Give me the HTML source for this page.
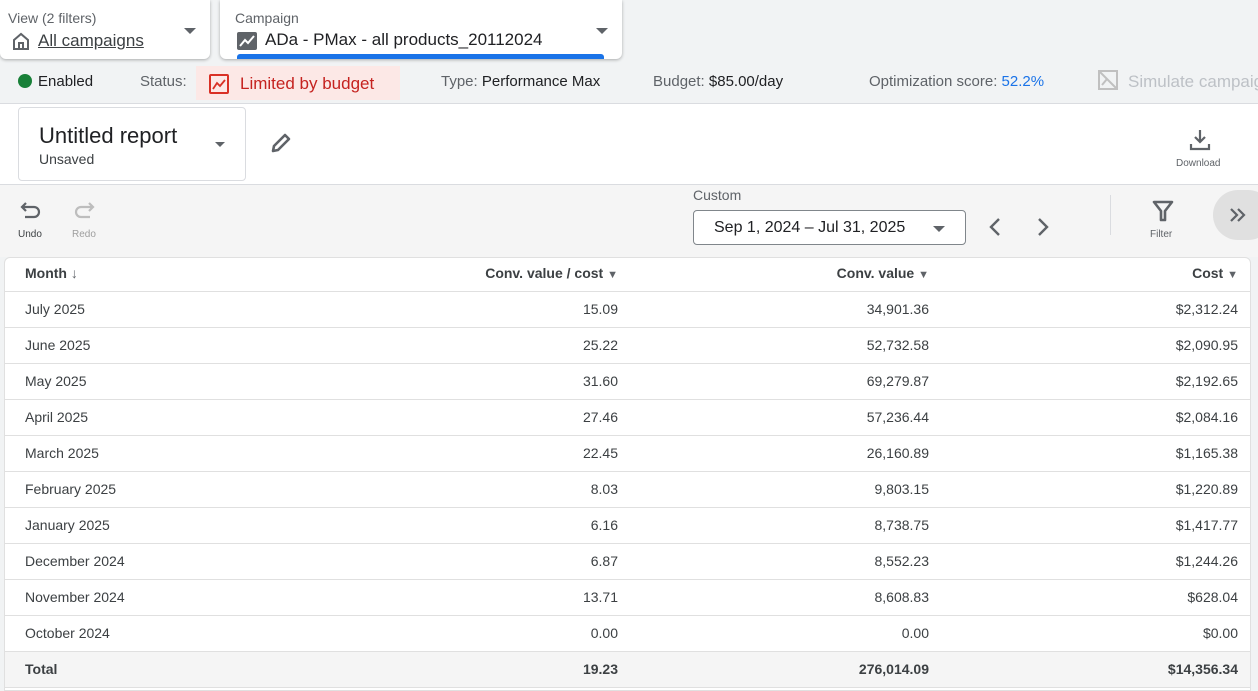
<!DOCTYPE html>
<html><head><meta charset="utf-8"><style>
*{box-sizing:border-box;margin:0;padding:0}
body{width:1258px;height:691px;overflow:hidden;background:#f1f3f4;font-family:"Liberation Sans",Roboto,sans-serif;color:#202124;position:relative}
.abs{position:absolute}
.card{position:absolute;background:#fff;border-radius:0 0 6px 6px;box-shadow:0 1px 3px rgba(0,0,0,.3)}
.lbl{font-size:14px;color:#5f6368}
.tri{width:0;height:0;border-left:6px solid transparent;border-right:6px solid transparent;border-top:6px solid #5f6368;position:absolute}
.st{font-size:15px;color:#5f6368;top:73px}
.st b{font-weight:normal;color:#202124}
table{border-collapse:collapse;width:100%;font-size:14px;position:relative;top:-3px}
td{height:36px;border-top:1px solid #e0e0e0;padding:0 20px;color:#3c4043}
td.r{text-align:right;padding-right:12px}
tr.h td{font-weight:bold;color:#3c4043;border-top:none;padding-top:1px}
tr.t td{background:#f5f5f5;font-weight:bold;border-bottom:1px solid #e0e0e0}
.ar{color:#5f6368;font-size:11px;font-weight:normal}
</style></head><body>
<div class="card" style="left:0;top:0;width:210px;height:59px">
 <div class="lbl abs" style="left:8px;top:10px">View (2 filters)</div>
 <svg class="abs" style="left:11px;top:31px" width="20" height="20" viewBox="0 0 20 20"><path d="M3 9 L10 3 L17 9 V18 H3 Z M8 18 V12 H12 V18" fill="none" stroke="#5f6368" stroke-width="2"/></svg>
 <div class="abs" style="left:38px;top:31px;font-size:17px;text-decoration:underline;color:#3c4043">All campaigns</div>
 <div class="tri" style="left:184px;top:28px"></div>
</div>
<div class="card" style="left:220px;top:0;width:402px;height:59px">
 <div class="lbl abs" style="left:15px;top:10px">Campaign</div>
 <svg class="abs" style="left:17px;top:32px" width="20" height="18" viewBox="0 0 20 18"><rect x="0" y="0" width="20" height="18" rx="2" fill="#5f6368"/><path d="M3 14 L8 8 L11 11 L17 4" fill="none" stroke="#fff" stroke-width="2"/></svg>
 <div class="abs" style="left:45px;top:30px;font-size:17px;color:#202124">ADa - PMax - all products_20112024</div>
 <div class="tri" style="left:376px;top:28px"></div>
 <div class="abs" style="left:17px;top:54px;width:367px;height:5px;background:#1a73e8;border-radius:3px 3px 0 0"></div>
</div>
<div class="abs" style="left:18px;top:74px;width:14px;height:14px;border-radius:50%;background:#188038"></div>
<div class="abs st" style="left:38px;color:#202124">Enabled</div>
<div class="abs st" style="left:140px">Status:</div>
<div class="abs" style="left:196px;top:66px;width:204px;height:34px;background:#fce8e6"></div>
<svg class="abs" style="left:209px;top:74px" width="20" height="20" viewBox="0 0 20 20"><rect x="1" y="1" width="18" height="18" rx="1" fill="none" stroke="#d93025" stroke-width="2"/><path d="M4 15 L8 9 L11 12 L16 6" fill="none" stroke="#d93025" stroke-width="1.8"/></svg>
<div class="abs" style="left:240px;top:74px;font-size:17px;color:#c5221f">Limited by budget</div>
<div class="abs st" style="left:441px">Type: <b>Performance Max</b></div>
<div class="abs st" style="left:653px">Budget: <b>$85.00/day</b></div>
<div class="abs st" style="left:869px">Optimization score: <span style="color:#1a73e8">52.2%</span></div>
<svg class="abs" style="left:1097px;top:69px" width="22" height="22" viewBox="0 0 22 22"><rect x="2" y="2" width="18" height="18" fill="none" stroke="#c0c0c0" stroke-width="2"/><path d="M2 2 L20 20 M5 16 L10 10 L13 13" fill="none" stroke="#c0c0c0" stroke-width="2"/></svg>
<div class="abs st" style="left:1128px;color:#bdc1c6;white-space:nowrap;font-size:17px;top:72px">Simulate campaign</div>

<div class="abs" style="left:0;top:103px;width:1258px;height:82px;background:#fff;border-top:1px solid #dadce0;border-bottom:1px solid #dadce0"></div>
<div class="abs" style="left:18px;top:107px;width:228px;height:74px;border:1px solid #dadce0;border-radius:4px;background:#fff">
 <div class="abs" style="left:20px;top:15px;font-size:22px;color:#202124">Untitled report</div>
 <div class="abs" style="left:20px;top:43px;font-size:14px;color:#3c4043">Unsaved</div>
 <div class="tri" style="left:196px;top:34px;border-width:5px 5px 0;border-top-color:#5f6368"></div>
</div>
<svg class="abs" style="left:269px;top:131px" width="24" height="24" viewBox="0 0 24 24"><path d="M4 20 L5 15 L16 4 L20 8 L9 19 Z" fill="none" stroke="#5f6368" stroke-width="2.6" stroke-linejoin="round"/></svg>
<svg class="abs" style="left:1188px;top:128px" width="24" height="24" viewBox="0 0 24 24"><path d="M12 2 V14 M7 9 L12 14 L17 9 M3 16 V21 H21 V16" fill="none" stroke="#5f6368" stroke-width="2.2"/></svg>
<div class="abs" style="left:1176px;top:158px;font-size:10px;color:#5f6368">Download</div>

<div class="abs" style="left:0;top:185px;width:1258px;height:72px;background:#f5f5f5"></div>
<svg class="abs" style="left:20px;top:199px" width="22" height="22" viewBox="0 0 22 22"><path d="M6 4 L2 8 L6 12 M2 8 H14 A5 5 0 0 1 14 18 H5" fill="none" stroke="#5f6368" stroke-width="2.2"/></svg>
<div class="abs" style="left:18px;top:229px;font-size:10px;color:#3c4043">Undo</div>
<svg class="abs" style="left:73px;top:199px" width="22" height="22" viewBox="0 0 22 22"><path d="M16 4 L20 8 L16 12 M20 8 H8 A5 5 0 0 0 8 18 H17" fill="none" stroke="#bdbdbd" stroke-width="2.2"/></svg>
<div class="abs" style="left:72px;top:229px;font-size:10px;color:#9e9e9e">Redo</div>
<div class="abs" style="left:693px;top:187px;font-size:14px;color:#5f6368">Custom</div>
<div class="abs" style="left:693px;top:210px;width:273px;height:35px;border:1px solid #80868b;border-radius:4px;background:#fff">
 <div class="abs" style="left:20px;top:8px;font-size:16px;color:#202124">Sep 1, 2024 – Jul 31, 2025</div>
 <div class="tri" style="left:239px;top:15px"></div>
</div>
<svg class="abs" style="left:986px;top:216px" width="20" height="22" viewBox="0 0 20 22"><path d="M13 3 L5 11 L13 19" fill="none" stroke="#5f6368" stroke-width="2.4"/></svg>
<svg class="abs" style="left:1033px;top:216px" width="20" height="22" viewBox="0 0 20 22"><path d="M6 3 L14 11 L6 19" fill="none" stroke="#5f6368" stroke-width="2.4"/></svg>
<div class="abs" style="left:1110px;top:195px;width:1px;height:40px;background:#dadce0"></div>
<svg class="abs" style="left:1151px;top:199px" width="24" height="24" viewBox="0 0 24 24"><path d="M3 3 H21 L14 12 V21 H10 V12 Z" fill="none" stroke="#5f6368" stroke-width="2.6" stroke-linejoin="round"/></svg>
<div class="abs" style="left:1150px;top:229px;font-size:10px;color:#5f6368">Filter</div>
<div class="abs" style="left:1213px;top:190px;width:60px;height:50px;border-radius:25px;background:#e0e0e0"></div>
<svg class="abs" style="left:1228px;top:206px" width="20" height="18" viewBox="0 0 20 18"><path d="M3 3 L9 9 L3 15 M10 3 L16 9 L10 15" fill="none" stroke="#5f6368" stroke-width="2.2"/></svg>

<div class="abs" style="left:4px;top:257px;width:1247px;height:434px;background:#fff;border:1px solid #e0e0e0;border-radius:6px 6px 0 0;overflow:hidden">
<table>
<colgroup><col style="width:280px"><col style="width:345px"><col style="width:311px"><col></colgroup>
<tr class="h"><td>Month <span style="font-weight:normal;color:#5f6368;font-size:14px">&#8595;</span></td><td class="r">Conv. value / cost <span class="ar">&#9660;</span></td><td class="r">Conv. value <span class="ar">&#9660;</span></td><td class="r">Cost <span class="ar">&#9660;</span></td></tr>
<tr><td>July 2025</td><td class="r">15.09</td><td class="r">34,901.36</td><td class="r">$2,312.24</td></tr>
<tr><td>June 2025</td><td class="r">25.22</td><td class="r">52,732.58</td><td class="r">$2,090.95</td></tr>
<tr><td>May 2025</td><td class="r">31.60</td><td class="r">69,279.87</td><td class="r">$2,192.65</td></tr>
<tr><td>April 2025</td><td class="r">27.46</td><td class="r">57,236.44</td><td class="r">$2,084.16</td></tr>
<tr><td>March 2025</td><td class="r">22.45</td><td class="r">26,160.89</td><td class="r">$1,165.38</td></tr>
<tr><td>February 2025</td><td class="r">8.03</td><td class="r">9,803.15</td><td class="r">$1,220.89</td></tr>
<tr><td>January 2025</td><td class="r">6.16</td><td class="r">8,738.75</td><td class="r">$1,417.77</td></tr>
<tr><td>December 2024</td><td class="r">6.87</td><td class="r">8,552.23</td><td class="r">$1,244.26</td></tr>
<tr><td>November 2024</td><td class="r">13.71</td><td class="r">8,608.83</td><td class="r">$628.04</td></tr>
<tr><td>October 2024</td><td class="r">0.00</td><td class="r">0.00</td><td class="r">$0.00</td></tr>
<tr class="t"><td>Total</td><td class="r">19.23</td><td class="r">276,014.09</td><td class="r">$14,356.34</td></tr>
</table>
</div>
</body></html>
